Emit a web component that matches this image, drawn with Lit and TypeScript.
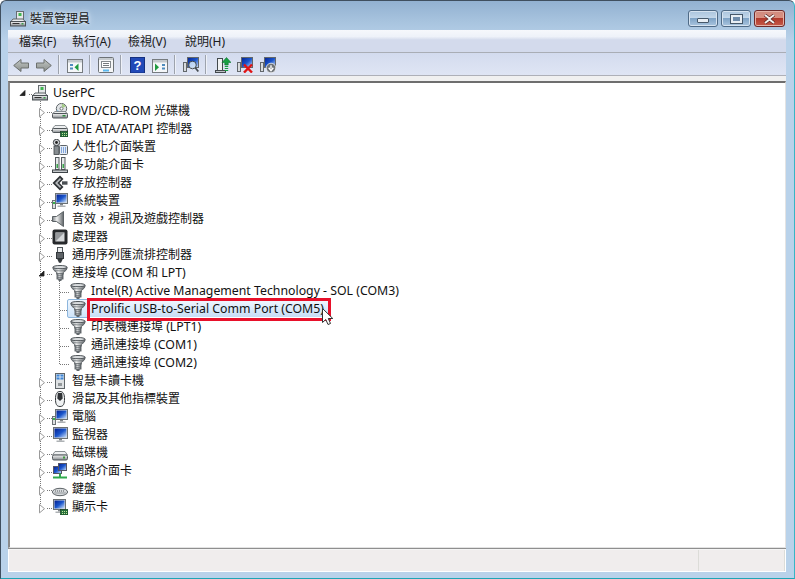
import { LitElement, html, css, svg } from "lit";
import { customElement } from "lit/decorators.js";

const defs = svg`
  <linearGradient id="m" x1="0" y1="0" x2="0" y2="1"><stop offset="0" stop-color="#f6f6f6"/><stop offset="1" stop-color="#878c90"/></linearGradient>
  <linearGradient id="s" x1="0" y1="0" x2="1" y2="1"><stop offset="0" stop-color="#05208f"/><stop offset=".5" stop-color="#1a55cc"/><stop offset="1" stop-color="#d4e7fb"/></linearGradient>
  <linearGradient id="h" x1="0" y1="0" x2="1" y2="0"><stop offset="0" stop-color="#7b8185"/><stop offset=".4" stop-color="#f0f1f1"/><stop offset="1" stop-color="#5f6468"/></linearGradient>
  <linearGradient id="a" x1="0" y1="0" x2="0" y2="1"><stop offset="0" stop-color="#c2c6c3"/><stop offset="1" stop-color="#8a8f8c"/></linearGradient>
`;

const monitor = (x: number, y: number, w: number, h: number) => svg`
  <rect x=${x + 0.5} y=${y + 0.5} width=${w} height=${h} fill="#d4d7d9" stroke="#6b7175"/>
  <rect x=${x + 1.5} y=${y + 1.5} width=${w - 2} height=${h - 2} fill="url(#s)"/>
  <rect x=${x + w / 2 - 1} y=${y + h + 1} width="3" height="1.500" fill="#7e8488"/>
  <rect x=${x + w / 2 - 3.5} y=${y + h + 2.5} width="8" height="1.500" fill="#aeb2b5"/>`;
const tower = svg`<rect x="0.500" y="7.500" width="3" height="8" fill="#dde0e2" stroke="#6d7377"/><rect x="1" y="9" width="2" height="2" fill="#37b24a"/>`;
const greenCard = svg`<rect x="8.500" y="10.500" width="7.500" height="5.500" fill="#27703c" stroke="#16401f" stroke-width=".7"/><path d="M10 12.500h5M10 14.500h5" stroke="#c4e49c" stroke-dasharray="1 1"/>`;
const driveBox = svg`<path d="M3 8.500h10l2.500 2h-15z" fill="#eef0f1" stroke="#70767a" stroke-width=".8"/><rect x="0.500" y="10.500" width="15" height="4.500" rx="1" fill="url(#m)" stroke="#50565a"/>`;
const portShape = svg`
  <ellipse cx="8" cy="2.200" rx="7.200" ry="1.700" fill="#d9dcde" stroke="#4f5559" stroke-width="1"/>
  <path d="M.9 2.700c.3 2.300 1.500 3.300 3.800 4.600v1.900h6.600V7.300c2.300-1.300 3.500-2.300 3.800-4.600-2 1.300-12.200 1.300-14.200 0z" fill="url(#h)" stroke="#52585c" stroke-width=".9"/>
  <path d="M2.300 5.200c2.500.9 8.900.9 11.400 0" stroke="#6f7579" stroke-width=".8" fill="none"/>
  <rect x="5" y="8.800" width="6" height="5.200" fill="url(#h)" stroke="#565c60" stroke-width=".9"/>
  <path d="M5.200 10.700h5.600M5.200 12.400h5.600" stroke="#5f6569" stroke-width=".8"/>
  <path d="M6 14h4l-.7 2H6.700z" fill="#62686c"/>`;

const ICONS: Record<string, unknown> = {
  pc: svg`<rect x="6.500" y="0.500" width="7" height="9" fill="#e6e9ea" stroke="#666c70"/><rect x="8.500" y="2" width="3" height="3" fill="#3fb650"/><path d="M3 8h10l2.500 3h-15z" fill="#eceeef" stroke="#5f6569"/><rect x="0.500" y="10.500" width="15" height="4.500" fill="url(#m)" stroke="#4c5256"/><path d="M2.500 12.500h7" stroke="#333"/><rect x="11.500" y="12" width="2" height="1.500" fill="#3c9a4a"/>`,
  dvd: svg`<circle cx="9.500" cy="5.600" r="5.200" fill="#e1e4e6" stroke="#62686c"/><circle cx="9.500" cy="5.600" r="1.500" fill="#fff" stroke="#6a7074"/><path d="M9.500 .8a5 5 0 0 1 4.300 2.500L10.500 5z" fill="#a4cc86"/><path d="M5 6.500 8 9H5z" fill="#8fc0e0"/>${driveBox}<rect x="10.500" y="12" width="3" height="1.500" fill="#2f8a3c"/>`,
  ide: svg`<path d="M3 4.500h10l2.500 3h-15z" fill="#eef0f1" stroke="#70767a" stroke-width=".8"/><rect x="0.500" y="7.500" width="15" height="4" rx="1" fill="url(#m)" stroke="#50565a"/>${greenCard}`,
  hid: svg`<circle cx="4.500" cy="3.500" r="3.200" fill="#d2d5d8" stroke="#3f4448"/><circle cx="4.500" cy="3.500" r="1.400" fill="#222"/><rect x="2" y="7" width="5" height="8.500" fill="#868c90" stroke="#3f4448" stroke-width=".8"/><rect x="7.500" y="6.500" width="8" height="9" rx="1" fill="#e3ebf4" stroke="#5d6367"/><path d="M9 9h5.500M9 11h5.500M9 13h5.500" stroke="#1f5cc0" stroke-dasharray="1 1"/>`,
  multi: svg`<rect x="3.500" y="0.500" width="3.500" height="12" fill="#e6e8ea" stroke="#565c60"/><rect x="9.500" y="0.500" width="3.500" height="12" fill="#e6e8ea" stroke="#565c60"/><rect x="4.500" y="7" width="1.500" height="4" fill="#3aa84b"/><rect x="10.500" y="7" width="1.500" height="4" fill="#3aa84b"/><rect x="0.500" y="13" width="15" height="2.500" fill="#c4c8cb" stroke="#3e4448"/>`,
  storage: svg`<path d="M8 .5 .5 8 8 15.500l3.500-3.500L7.500 8l4-4z" fill="#2f3336"/><path d="M8 3 3 8l5 5 1.200-1.200L5.400 8l3.800-3.800z" fill="#b4b8bb"/><path d="M10 6.300h5.500v3.400H10z" fill="#4a4f53"/>`,
  sys: svg`${tower}${monitor(3, 0, 12, 10)}`,
  audio: svg`<path d="M.5 5.500h4L11.500.5v15l-7-5h-4z" fill="url(#h)" stroke="#5c6266"/>`,
  cpu: svg`<rect x=".5" y=".5" width="15" height="15" rx="2" fill="#26292b"/><rect x="3.500" y="3.500" width="9" height="9" fill="#d5d8da"/><path d="M3.500 3.500h9l-9 9z" fill="#96999c"/>`,
  usb: svg`<rect x="5.500" y="0.500" width="5" height="5" fill="#eceeef" stroke="#4f5559"/><rect x="4.500" y="5.500" width="7" height="6" fill="#5e6367" stroke="#33383b"/><path d="M5 11.500h6L9 15.800H7z" fill="#33383b"/>`,
  port: portShape,
  card: svg`<rect x="3.500" y="0.500" width="9" height="15" fill="#dfe2e4" stroke="#5f6569"/><rect x="4.500" y="1.500" width="7" height="5" fill="#3f86d6"/><path d="M8 1.500v5M4.500 4h7" stroke="#fff" stroke-width=".7"/><rect x="6" y="10" width="4" height="3" fill="#93989b"/>`,
  mouse: svg`<path d="M8 .5c3.500 0 4.500 3 4.500 7.500s-.8 7.500-4.500 7.500S3.500 12.500 3.500 8 4.500.5 8 .5z" fill="#f0f2f3" stroke="#33383b"/><path d="M5.800 2h4.400l.5 5.500L8 10 5.300 7.500z" fill="#2f3336"/>`,
  pc2: svg`${tower}${monitor(3, 0, 12, 10)}`,
  mon: svg`${monitor(1, 0, 14, 11)}`,
  disk: svg`<path d="M3 6.500h10l2.500 3.500h-15z" fill="#eef0f1" stroke="#70767a" stroke-width=".8"/><rect x="0.500" y="10" width="15" height="5" rx="1.500" fill="url(#m)" stroke="#50565a"/><rect x="11" y="11.500" width="2" height="2" fill="#3f9a40"/>`,
  net: svg`<rect x="1.500" y="3.500" width="8" height="7" fill="url(#s)" stroke="#556"/><rect x="6.500" y="0.500" width="8" height="7" fill="url(#s)" stroke="#556"/><path d="M8 10.500v3M1 14.500h14" stroke="#2faa4c" stroke-width="2"/>`,
  kb: svg`<ellipse cx="8" cy="11" rx="7.600" ry="3.700" fill="#d6d9db" stroke="#5d6367"/><path d="M3 10h10M2.500 12h11" stroke="#565c60" stroke-dasharray="1 1"/>`,
  disp: svg`${monitor(1, 0, 12, 10)}${greenCard}`,
};

const TOOL: Record<string, unknown> = {
  back: svg`<path d="M.7 8.500l7.300-6v3.500h7.500v5H8v3.500z" fill="url(#a)" stroke="#6c706e"/>`,
  fwd: svg`<path d="M15.300 8.500 8 2.500V6H.5v5H8v3.500z" fill="url(#a)" stroke="#6c706e"/>`,
  panel: svg`<rect x="0.500" y="2.500" width="15" height="13" fill="#f5f7f9" stroke="#767b7f"/><rect x="1" y="3" width="14" height="2.500" fill="#c4c9ce"/><path d="M3 7h3v2H3zM3 10.500h3v2H3z" fill="#4f8cbe"/><path d="M11.500 6.500v7.500L7.500 10.200z" fill="#1f9a40"/>`,
  prop: svg`<rect x="0.500" y="0.500" width="15" height="15" rx="1" fill="#f5f6f7" stroke="#6d7276"/><rect x="1" y="1" width="14" height="2" fill="#c6cbcf"/><rect x="3.500" y="4.500" width="9" height="6" fill="#fff" stroke="#84898d"/><path d="M5 6.500h6M5 8.500h6" stroke="#74797d"/><rect x="5" y="12.500" width="6" height="2" fill="#5cb8ee"/>`,
  help: svg`<rect x="0.500" y="0.500" width="14" height="15.500" fill="#2149b8" stroke="#15307f"/><text x="7.500" y="13" font-size="13" font-weight="700" text-anchor="middle" fill="#fff" font-family="Liberation Sans">?</text>`,
  panel2: svg`<rect x="0.500" y="2.500" width="15" height="13" fill="#f5f7f9" stroke="#767b7f"/><rect x="1" y="3" width="14" height="2.500" fill="#c4c9ce"/><path d="M3 6.500v7.500l4-3.800z" fill="#1f9a40"/><path d="M10 7h3v2h-3zM10 10.500h3v2h-3z" fill="#4f8cbe"/>`,
  scan: svg`<rect x="0.500" y="5.500" width="3" height="9" fill="#d8dbdd" stroke="#62676b"/><rect x="4.500" y="0.500" width="11" height="10" fill="url(#s)" stroke="#62676b"/><circle cx="9.500" cy="8" r="3.800" fill="#d8eafa" fill-opacity=".85" stroke="#454b50"/><path d="m12.300 10.800 3 3.700" stroke="#454b50" stroke-width="1.800"/>`,
  upd: svg`<rect x="2.500" y="1.500" width="5" height="12" fill="#f0f2f3" stroke="#43494d"/><rect x="0.500" y="13.500" width="10" height="2" fill="#bdc1c4" stroke="#43494d"/><path d="M11.500.5l4.500 5h-2.800V8H9.800V5.500H7z" fill="#18a043" stroke="#0f7430" stroke-width=".6"/><path d="M9.800 9.500h3.400M9.800 11.500h3.400M9.800 13.500h3.400" stroke="#18a043" stroke-width="1.200"/>`,
  del: svg`<rect x="0.500" y="5.500" width="3" height="9" fill="#d8dbdd" stroke="#62676b"/><rect x="4.500" y="0.500" width="11" height="10" fill="url(#s)" stroke="#62676b"/><path d="m7 7.500 8 8M15 7.500l-8 8" stroke="#e01414" stroke-width="2.400"/>`,
  dis: svg`<rect x="0.500" y="5.500" width="3" height="9" fill="#d8dbdd" stroke="#62676b"/><rect x="4.500" y="0.500" width="11" height="10" fill="url(#s)" stroke="#62676b"/><circle cx="11" cy="11" r="4.800" fill="#6f7478" stroke="#fff" stroke-width=".7"/><path d="M11 8.300v3.200M8.700 10.800l2.300 2.800 2.300-2.800" stroke="#fff" stroke-width="1.400" fill="none"/>`,
};

type Row = { level: number; icon: string; text: string; kids?: boolean; open?: boolean; sel?: boolean; last?: boolean };

const ROWS: Row[] = [
  { level: 0, icon: "pc", text: "UserPC", kids: true, open: true },
  { level: 1, icon: "dvd", text: "DVD/CD-ROM 光碟機", kids: true },
  { level: 1, icon: "ide", text: "IDE ATA/ATAPI 控制器", kids: true },
  { level: 1, icon: "hid", text: "人性化介面裝置", kids: true },
  { level: 1, icon: "multi", text: "多功能介面卡", kids: true },
  { level: 1, icon: "storage", text: "存放控制器", kids: true },
  { level: 1, icon: "sys", text: "系統裝置", kids: true },
  { level: 1, icon: "audio", text: "音效，視訊及遊戲控制器", kids: true },
  { level: 1, icon: "cpu", text: "處理器", kids: true },
  { level: 1, icon: "usb", text: "通用序列匯流排控制器", kids: true },
  { level: 1, icon: "port", text: "連接埠 (COM 和 LPT)", kids: true, open: true },
  { level: 2, icon: "port", text: "Intel(R) Active Management Technology - SOL (COM3)" },
  { level: 2, icon: "port", text: "Prolific USB-to-Serial Comm Port (COM5)", sel: true },
  { level: 2, icon: "port", text: "印表機連接埠 (LPT1)" },
  { level: 2, icon: "port", text: "通訊連接埠 (COM1)" },
  { level: 2, icon: "port", text: "通訊連接埠 (COM2)", last: true },
  { level: 1, icon: "card", text: "智慧卡讀卡機", kids: true },
  { level: 1, icon: "mouse", text: "滑鼠及其他指標裝置", kids: true },
  { level: 1, icon: "pc2", text: "電腦", kids: true },
  { level: 1, icon: "mon", text: "監視器", kids: true },
  { level: 1, icon: "disk", text: "磁碟機", kids: true },
  { level: 1, icon: "net", text: "網路介面卡", kids: true },
  { level: 1, icon: "kb", text: "鍵盤", kids: true },
  { level: 1, icon: "disp", text: "顯示卡", kids: true, last: true },
];

@customElement("app-root")
export class AppRoot extends LitElement {
  static styles = css`
    :host { display: block; width: 795px; height: 579px; font-family: "Noto Sans", "Noto Sans CJK TC", sans-serif; font-size: 12px; color: #111; overflow: hidden; background: #fff; }
    .win { box-sizing: border-box; width: 795px; height: 579px; display: flex; flex-direction: column; padding: 0 8px 6px 7px; border: 1px solid #3f4f5f; border-bottom-color: #1ea5b5; border-right-color: #37b5c5; border-radius: 6px 6px 0 0; background: linear-gradient(#92b1d1 0, #a7c3de 20px, #b9d2ea 40px, #b9d2ea 100%); }
    .title { height: 29px; flex: none; display: flex; align-items: center; gap: 4px; padding-left: 2px; padding-top: 7px; box-sizing: border-box; }
    .title-text { color: #1a1a1a; line-height: 16px; text-shadow: 0 0 6px #e4eef8, 0 0 3px #e4eef8; }
    .spacer { flex: 1; }
    .caps { display: flex; gap: 3px; align-self: flex-start; margin-top: 2px; margin-right: 1px; }
    .cap { width: 28px; height: 15px; border: 1px solid #4f6a86; border-radius: 3px; display: flex; align-items: center; justify-content: center; background: linear-gradient(#a9c3dc 0, #c3d7ea 45%, #7fa3c6 50%, #aac5df 100%); box-shadow: inset 0 0 0 1px #d6e3f0; }
    .cap.close { width: 29px; border-color: #6e2a2a; background: linear-gradient(#d08b7f 0, #d98f80 45%, #b13a2c 50%, #c65a4a 100%); box-shadow: inset 0 0 0 1px #e5b3a8; }
    .min { width: 10px; height: 3px; background: #e8eef4; border: 1px solid #46586a; border-radius: 1px; margin-top: 4px; }
    .max { width: 7px; height: 4px; border: 2px solid #e8eef4; outline: 1px solid #46586a; background: #6f8cab; }
    .menu { height: 22px; flex: none; display: grid; grid-template-columns: 53px 56px 57px auto; align-items: center; padding-left: 11px; background: linear-gradient(#f6f8fc 0, #eef2f9 30%, #d3daec 45%, #d3daec 100%); border-bottom: 1px solid #a9adb5; color: #1b1b1b; }
    .tools { height: 22px; flex: none; display: flex; align-items: center; padding-left: 5px; background: linear-gradient(#d3dbee, #dfe5f4); border-bottom: 1px solid #aeb0b8; }
    .tb { width: 16px; height: 16px; display: block; flex: none; margin-top: 1px; }
    .sep { width: 1px; height: 19px; background: #9da3ad; box-shadow: 1px 0 0 #eef1f8; flex: none; }
    .gap { height: 5px; flex: none; background: #f0f0f0; }
    .tree { flex: 1; min-height: 0; position: relative; background: #fff; border-style: solid; border-width: 2px 1px 1px 2px; border-color: #6e6e6e #e3e3e3 #e3e3e3 #8a8a8a; }
    .row { height: 18px; display: flex; align-items: flex-start; line-height: 18px; white-space: nowrap; }
    .conn { display: block; flex: none; height: 18px; }
    .ic { position: relative; width: 16px; height: 16px; margin-top: 2px; flex: none; }
    .ic svg { display: block; position: relative; }
    .ic.sel::before { content: ""; position: absolute; left: -3px; top: -2px; right: -3px; bottom: -1px; border: 1px solid #8db6dd; border-radius: 2px; background: linear-gradient(#f0f7fe, #cfe4f9); }
    .t { display: block; margin-top: 1px; }
    .lat { font-size: 12.3px; }
    .t.sel { height: 16px; line-height: 16px; margin-top: 2px; padding: 0 4px 0 1px; background: linear-gradient(#eef6fe, #c6def6); }
    .red { position: absolute; left: 77px; top: 215px; width: 238px; height: 17px; border: 3px solid #e8102a; pointer-events: none; }
    .cursor { position: absolute; left: 312px; top: 225px; display: block; }
    .status { height: 21px; flex: none; display: flex; background: #f0eded; border-top: 1px solid #f5f5f5; box-shadow: 0 -1px 0 #8f8f8f; margin-top: 1px; border-bottom: 1px solid #fff; border-left: 1px solid #fff; border-right: 1px solid #fff; }
    .s1 { flex: 1; border-right: 1px solid #dcdcd8; margin-right: 1px; }
    .s2 { width: 84px; border-right: 1px solid #dcdcd8; }
  `;

  private runs(text: string) {
    return text.split(/([\x21-\x7e][\x20-\x7e]*[\x21-\x7e]|[\x21-\x7e])/).map((p, i) => (i % 2 ? html`<span class="lat">${p}</span>` : p));
  }

  private conn(r: Row) {
    const w = r.level === 0 ? 22 : r.level === 1 ? 42 : 60;
    const V = 30;
    const C = 49;
    const dots = (x1: number, y1: number, x2: number, y2: number) =>
      svg`<line x1=${x1} y1=${y1} x2=${x2} y2=${y2} stroke="#777" stroke-dasharray="1 1" shape-rendering="crispEdges"/>`;
    const isRoot = r.level === 0;
    const inPorts = r.level === 2;
    return html`<svg class="conn" width=${w} height="18" viewBox="0 0 ${w} 18">
      ${isRoot ? dots(19, 11.5, 22, 11.5) : ""}
      ${isRoot ? dots(V + 0.5, 12, V + 0.5, 18) : r.last && r.level === 1 ? dots(V + 0.5, 0, V + 0.5, 11) : dots(V + 0.5, 0, V + 0.5, 18)}
      ${r.level === 1 ? dots(37, 11.5, 42, 11.5) : ""}
      ${inPorts ? dots(C + 0.5, 0, C + 0.5, r.last ? 12 : 18) : ""}
      ${inPorts ? dots(C + 1, 11.5, 60, 11.5) : ""}
      ${r.icon === "port" && r.level === 1 ? dots(C + 0.5, 15, C + 0.5, 18) : ""}
      ${isRoot ? svg`<path d="M15 7.500v5h-5z" fill="#222" stroke="#222" stroke-width=".8"/>` : ""}
      ${r.level === 1 && r.kids && !r.open ? svg`<path d="M29.500 7.500l5 4.200-5 4.200z" fill="#fff" stroke="#9a9a9a"/>` : ""}
      ${r.level === 1 && r.open ? svg`<path d="M34 8v5h-5z" fill="#222" stroke="#222" stroke-width=".8"/>` : ""}
    </svg>`;
  }

  private tool(n: string) {
    return html`<svg class="tb" viewBox="0 0 16 16">${TOOL[n]}</svg>`;
  }

  render() {
    const margin = (px: number) => `margin-left:${px}px`;
    return html`
      <svg width="0" height="0" style="position:absolute"><defs>${defs}</defs></svg>
      <div class="win">
        <div class="title">
          <svg width="16" height="16" viewBox="0 0 16 16">${ICONS.pc}</svg>
          <span class="title-text">裝置管理員</span>
          <span class="spacer"></span>
          <div class="caps">
            <div class="cap"><div class="min"></div></div>
            <div class="cap"><div class="max"></div></div>
            <div class="cap close">
              <svg width="13" height="10" viewBox="0 0 13 10"><path d="M2 1l4.500 3.500L11 1M2 9l4.500-3.500L11 9" stroke="#5a2420" stroke-width="3.400" fill="none"/><path d="M2 1l4.500 3.500L11 1M2 9l4.500-3.500L11 9" stroke="#f1f1f1" stroke-width="2" fill="none"/></svg>
            </div>
          </div>
        </div>
        <div class="menu"><span>檔案(F)</span><span>執行(A)</span><span>檢視(V)</span><span>說明(H)</span></div>
        <div class="tools">
          ${this.tool("back")}<span style=${margin(7)}></span>${this.tool("fwd")}
          <span class="sep" style=${margin(6)}></span><span style=${margin(8)}></span>${this.tool("panel")}
          <span class="sep" style=${margin(6)}></span><span style=${margin(8)}></span>${this.tool("prop")}
          <span class="sep" style=${margin(6)}></span><span style=${margin(9)}></span>${this.tool("help")}
          <span style=${margin(6)}></span>${this.tool("panel2")}
          <span class="sep" style=${margin(6)}></span><span style=${margin(8)}></span>${this.tool("scan")}
          <span class="sep" style=${margin(6)}></span><span style=${margin(9)}></span>${this.tool("upd")}
          <span style=${margin(6)}></span>${this.tool("del")}
          <span style=${margin(7)}></span>${this.tool("dis")}
        </div>
        <div class="gap"></div>
        <div class="tree">
          ${ROWS.map(
            (r) => html`<div class="row">
              ${this.conn(r)}
              <div class="ic ${r.sel ? "sel" : ""}"><svg width="16" height="16" viewBox="0 0 16 16">${ICONS[r.icon]}</svg></div>
              <span class="t ${r.sel ? "sel" : ""}" style=${margin(r.level === 0 ? 5 : r.level === 1 ? 4 : r.sel ? 4 : 5)}>${this.runs(r.text)}</span>
            </div>`
          )}
          <div class="red"></div>
          <svg class="cursor" width="12" height="19" viewBox="0 0 12 19"><path d="M.5.500v14l3.300-3 2.200 5 2.500-1-2.200-5h4.500z" fill="#fff" stroke="#333"/></svg>
        </div>
        <div class="status"><div class="s1"></div><div class="s2"></div></div>
      </div>
    `;
  }
}
